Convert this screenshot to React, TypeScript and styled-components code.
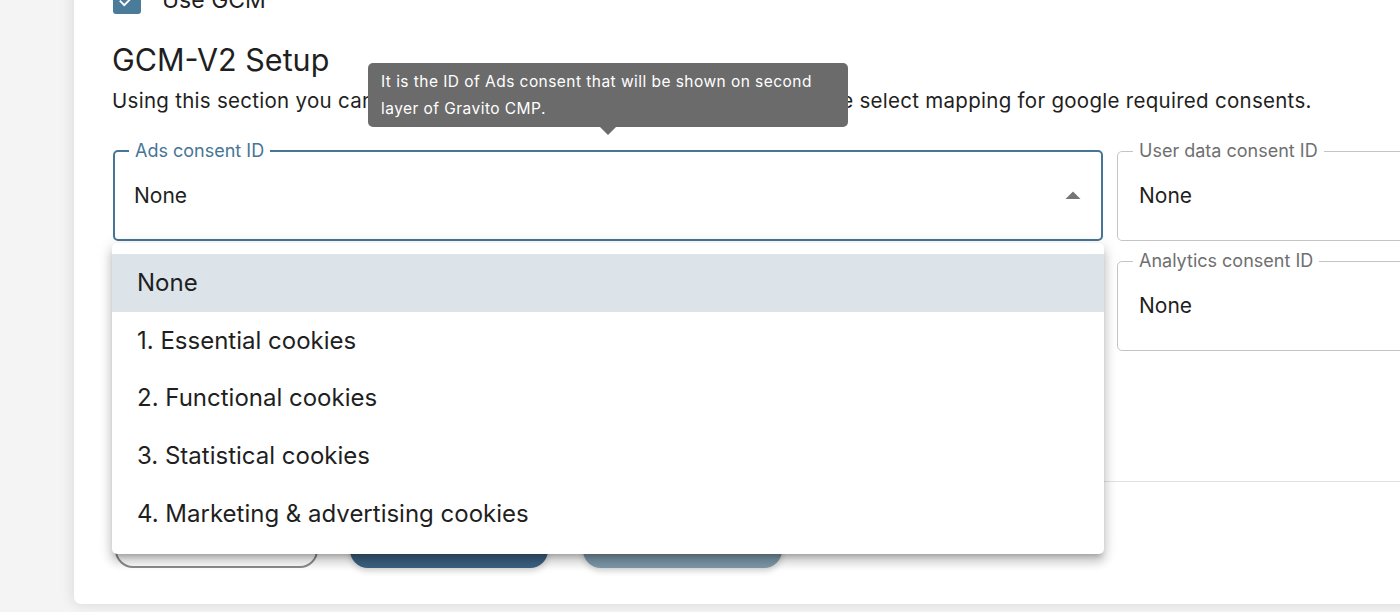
import React from "react";
import styled, { createGlobalStyle } from "styled-components";

const GlobalStyle = createGlobalStyle`
  html, body {
    margin: 0;
    padding: 0;
    width: 1400px;
    height: 612px;
    overflow: hidden;
    background: #f4f4f4;
    font-family: Inter, "Noto Sans", sans-serif;
    color: #1f1f1f;
  }
  * { box-sizing: border-box; }
`;

const Page = styled.div`
  display: flex;
  padding-left: 74px;
  height: 612px;
`;

const Card = styled.section`
  flex: 0 0 auto;
  width: 2200px;
  height: 648px;
  margin-top: -44px;
  padding: 30px 38px 0;
  background: #ffffff;
  border-radius: 0 0 0 7px;
  box-shadow: -4px 0 14px rgba(0, 0, 0, 0.06), 0 4px 12px rgba(0, 0, 0, 0.04);
  display: flex;
  flex-direction: column;
`;

const CheckRow = styled.label`
  display: flex;
  align-items: center;
  gap: 21px;
  height: 28px;
  padding-left: 1px;
  font-size: 23px;
`;

const CheckBox = styled.span`
  width: 28px;
  height: 28px;
  border-radius: 3px;
  background: #4b7b9a;
  display: flex;
  align-items: center;
  justify-content: center;
`;

const Title = styled.h2`
  margin: 28px 0 0;
  font-size: 30.5px;
  font-weight: 400;
  line-height: 36px;
  color: #1f1f1f;
`;

const Description = styled.p`
  margin: 9px 0 0;
  font-size: 20.5px;
  letter-spacing: 0.28px;
  line-height: 28px;
  color: #1f1f1f;
`;

const FieldGrid = styled.div`
  display: grid;
  grid-template-columns: 990px 990px;
  column-gap: 14px;
  row-gap: 11px;
  margin-top: 27px;
  padding-left: 1px;
`;

const FieldWrap = styled.div`
  position: relative;
`;

const Fieldset = styled.fieldset<{ $focused?: boolean }>`
  margin: 0;
  padding: 0;
  height: 99px;
  border: ${(p) => (p.$focused ? "2px solid #467595" : "1px solid #c4c4c4")};
  border-radius: 5px;
  min-width: 0;
`;

const Legend = styled.legend<{ $focused?: boolean }>`
  margin-left: ${(p) => (p.$focused ? "14px" : "15px")};
  padding: 0 6px;
  font-size: 18px;
  line-height: 18px;
  color: ${(p) => (p.$focused ? "#467595" : "#6f6f6f")};
`;

const ValueRow = styled.div<{ $focused?: boolean }>`
  height: 71px;
  display: flex;
  align-items: center;
  justify-content: space-between;
  padding: 0 10px 0 ${(p) => (p.$focused ? "19px" : "21px")};
  font-size: 21px;
`;

const Tooltip = styled.div`
  position: absolute;
  top: -79px;
  left: 50%;
  transform: translateX(-50%);
  width: 480px;
  padding: 5px 13px;
  background: #6b6b6b;
  color: #ffffff;
  border-radius: 5px;
  font-size: 15.5px;
  letter-spacing: 0.45px;
  line-height: 27px;
  z-index: 5;

  &::after {
    content: "";
    position: absolute;
    left: 50%;
    bottom: -8px;
    transform: translateX(-50%);
    border-left: 8px solid transparent;
    border-right: 8px solid transparent;
    border-top: 8px solid #6b6b6b;
  }
`;

const Menu = styled.ul`
  position: absolute;
  top: 101px;
  left: -1px;
  width: 992px;
  margin: 0;
  padding: 11px 0 12px;
  list-style: none;
  background: #ffffff;
  border-radius: 5px;
  box-shadow: 0 5px 5px -3px rgba(0, 0, 0, 0.2), 0 8px 10px 1px rgba(0, 0, 0, 0.14),
    0 3px 14px 2px rgba(0, 0, 0, 0.12);
  z-index: 10;
`;

const MenuItem = styled.li<{ $selected?: boolean }>`
  height: 57.6px;
  display: flex;
  align-items: center;
  padding-left: 25px;
  font-size: 24px;
  color: #1f1f1f;
  background: ${(p) => (p.$selected ? "#dce4ea" : "transparent")};
`;

const Divider = styled.hr`
  margin: 130px 0 0;
  border: 0;
  border-top: 1px solid #e2e2e2;
`;

const ButtonRow = styled.div`
  display: flex;
  margin-top: 40px;
  padding-left: 3px;
`;

const Button = styled.button<{ $variant: "outline" | "primary" | "muted"; $width: number; $gap: number }>`
  width: ${(p) => p.$width}px;
  height: 46px;
  margin-right: ${(p) => p.$gap}px;
  border-radius: 18px;
  font-family: inherit;
  font-size: 18px;
  border: ${(p) => (p.$variant === "outline" ? "2px solid #8c8c8c" : "0")};
  background: ${(p) =>
    p.$variant === "primary" ? "#3b6181" : p.$variant === "muted" ? "#7d99aa" : "#ffffff"};
  color: ${(p) => (p.$variant === "outline" ? "#555" : "#fff")};
  box-shadow: ${(p) =>
    p.$variant === "outline" ? "none" : "0 3px 6px rgba(0, 0, 0, 0.18)"};
`;

const ArrowUp = () => (
  <svg width="36" height="36" viewBox="0 0 24 24" fill="#757575">
    <path d="M7 14l5-5 5 5z" />
  </svg>
);

const Check = () => (
  <svg width="22" height="22" viewBox="0 0 24 24" fill="#ffffff">
    <path d="M9 16.17 4.83 12l-1.42 1.41L9 19 21 7l-1.41-1.41z" />
  </svg>
);

const options = [
  "None",
  "1. Essential cookies",
  "2. Functional cookies",
  "3. Statistical cookies",
  "4. Marketing & advertising cookies",
];

export default function App() {
  return (
    <>
      <GlobalStyle />
      <Page>
        <Card>
          <CheckRow>
            <CheckBox>
              <Check />
            </CheckBox>
            Use GCM
          </CheckRow>
          <Title>GCM-V2 Setup</Title>
          <Description>
            Using this section you can configure the Google Consent Mode V2. Please select mapping for
            google required consents.
          </Description>
          <FieldGrid>
            <FieldWrap>
              <Fieldset $focused>
                <Legend $focused>Ads consent ID</Legend>
                <ValueRow $focused>
                  None
                  <ArrowUp />
                </ValueRow>
              </Fieldset>
              <Tooltip>
                It is the ID of Ads consent that will be shown on second layer of Gravito CMP.
              </Tooltip>
              <Menu>
                {options.map((o, i) => (
                  <MenuItem key={o} $selected={i === 0}>
                    {o}
                  </MenuItem>
                ))}
              </Menu>
            </FieldWrap>
            <FieldWrap>
              <Fieldset>
                <Legend>User data consent ID</Legend>
                <ValueRow>None</ValueRow>
              </Fieldset>
            </FieldWrap>
            <FieldWrap>
              <Fieldset>
                <Legend>Personalization consent ID</Legend>
                <ValueRow>None</ValueRow>
              </Fieldset>
            </FieldWrap>
            <FieldWrap>
              <Fieldset>
                <Legend>Analytics consent ID</Legend>
                <ValueRow>None</ValueRow>
              </Fieldset>
            </FieldWrap>
          </FieldGrid>
          <Divider />
          <ButtonRow>
            <Button $variant="outline" $width={203} $gap={32}>
              Cancel
            </Button>
            <Button $variant="primary" $width={198} $gap={35}>
              Save
            </Button>
            <Button $variant="muted" $width={199} $gap={0}>
              Publish
            </Button>
          </ButtonRow>
        </Card>
      </Page>
    </>
  );
}
